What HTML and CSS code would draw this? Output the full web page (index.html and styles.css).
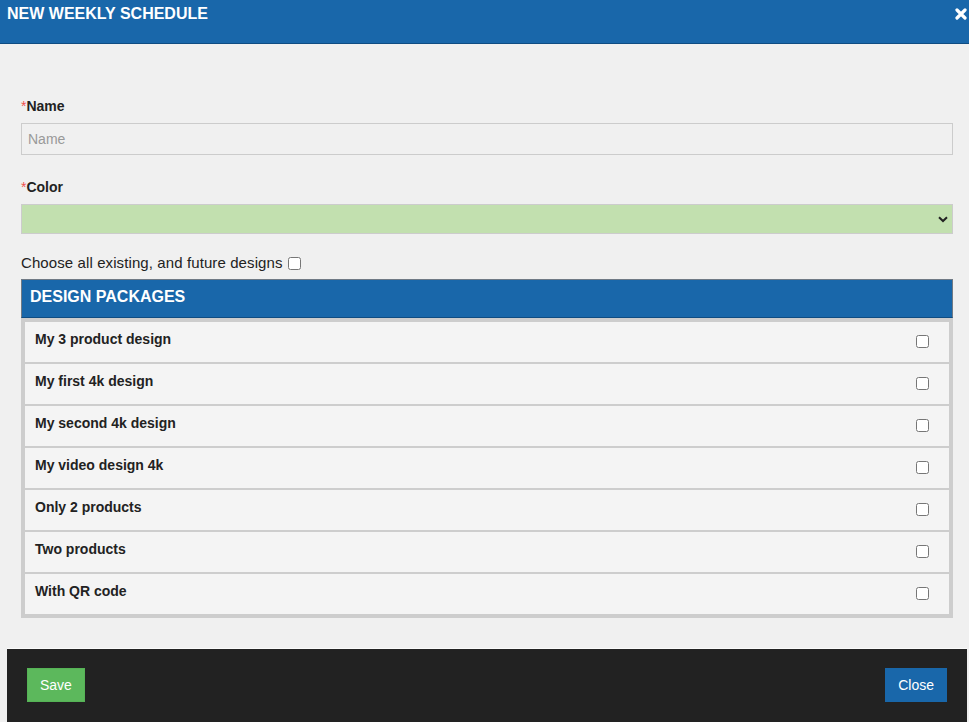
FILE: index.html
```html
<!DOCTYPE html>
<html>
<head>
<meta charset="utf-8">
<link rel="stylesheet" href="styles.css">
</head>
<body>
<div class="header">
  <div class="title">NEW WEEKLY SCHEDULE</div>
  <svg class="close-x" width="12" height="12" viewBox="0 0 12 12"><path d="M2 2 L10 10 M10 2 L2 10" stroke="#fff" stroke-width="3.2" stroke-linecap="round"/></svg>
</div>
<div class="content">
  <label class="field-label"><span class="req">*</span>Name</label>
  <input class="text-input" type="text" placeholder="Name">
  <label class="field-label second"><span class="req">*</span>Color</label>
  <div class="select-wrap">
    <select class="color-select"><option></option></select>
    <svg class="chev" width="10" height="7" viewBox="0 0 10 7"><path d="M1 1.2 L5 5 L9 1.2" fill="none" stroke="#222" stroke-width="2"/></svg>
  </div>
  <div class="choose-all">Choose all existing, and future designs <input type="checkbox" class="cb"></div>
  <div class="packages">
    <div class="pk-head">DESIGN PACKAGES</div>
    <div class="pk-body">
      <div class="pk-row"><span class="pk-name">My 3 product design</span><input type="checkbox" class="cb"></div>
      <div class="pk-row"><span class="pk-name">My first 4k design</span><input type="checkbox" class="cb"></div>
      <div class="pk-row"><span class="pk-name">My second 4k design</span><input type="checkbox" class="cb"></div>
      <div class="pk-row"><span class="pk-name">My video design 4k</span><input type="checkbox" class="cb"></div>
      <div class="pk-row"><span class="pk-name">Only 2 products</span><input type="checkbox" class="cb"></div>
      <div class="pk-row"><span class="pk-name">Two products</span><input type="checkbox" class="cb"></div>
      <div class="pk-row"><span class="pk-name">With QR code</span><input type="checkbox" class="cb"></div>
    </div>
  </div>
</div>
<div class="footer">
  <button class="btn btn-save">Save</button>
  <button class="btn btn-close">Close</button>
</div>
</body>
</html>
```
FILE: styles.css
```css
html, body {
  margin: 0;
  padding: 0;
  background: #f0f0f0;
  font-family: "Liberation Sans", Arial, sans-serif;
  color: #222;
}
.header {
  height: 43px;
  background: #1967aa;
  border-bottom: 1px solid #0f4c82;
  display: flex;
  justify-content: space-between;
  align-items: flex-start;
  padding: 0 2px 0 7px;
}
.title {
  color: #fff;
  font-weight: bold;
  font-size: 16px;
  line-height: 18px;
  padding-top: 5px;
}
.close-x {
  margin-top: 8px;
}
.content {
  padding: 54px 16px 0 21px;
}
.field-label {
  display: block;
  font-size: 14px;
  font-weight: bold;
  line-height: 16px;
  margin-bottom: 9px;
  color: #222;
}
.field-label.second {
  margin-top: 24px;
}
.req {
  color: #f0524f;
  font-weight: normal;
}
.text-input {
  display: block;
  box-sizing: border-box;
  width: 100%;
  height: 32px;
  margin: 0;
  border: 1px solid #ccc;
  background: transparent;
  padding: 0 6px;
  font-family: "Liberation Sans", Arial, sans-serif;
  font-size: 14px;
  color: #333;
  outline: none;
}
.text-input::placeholder {
  color: #999;
}
.select-wrap {
  position: relative;
}
.color-select {
  display: block;
  box-sizing: border-box;
  width: 100%;
  height: 30px;
  margin: 0;
  border: 1px solid #ccc;
  background: #c2e0af;
  appearance: none;
  -webkit-appearance: none;
  border-radius: 0;
  outline: none;
}
.chev {
  position: absolute;
  right: 5px;
  top: 12px;
}
.choose-all {
  margin-top: 21px;
  display: flex;
  align-items: center;
  font-size: 15px;
  line-height: 16px;
  height: 16px;
  margin-bottom: 8px;
  color: #222;
  letter-spacing: 0.1px;
}
.choose-all .cb {
  margin: 0 0 0 5px;
}
.cb {
  width: 13px;
  height: 13px;
  margin: 0;
}
.pk-head {
  box-sizing: border-box;
  height: 39px;
  background: #1967aa;
  border: 1px solid #707a85;
  border-bottom: 1px solid #0f4c82;
  color: #fff;
  font-weight: bold;
  font-size: 16px;
  line-height: 18px;
  padding: 8px 8px 0;
}
.pk-body {
  background: #cdcdcd;
  padding: 4px;
  display: flex;
  flex-direction: column;
  gap: 2px;
}
.pk-row {
  height: 40px;
  background: #f4f4f4;
  display: flex;
  justify-content: space-between;
  align-items: center;
  padding: 0 20px 0 10px;
}
.pk-name {
  font-size: 14px;
  font-weight: bold;
  line-height: 16px;
  padding-bottom: 6px;
  color: #222;
}
.pk-row .cb {
  margin-bottom: 1px;
}
.footer {
  margin: 30px 2px 0 7px;
  border-top: 1px solid #fafafa;
  background: #222;
  height: 74px;
  box-sizing: border-box;
  padding: 19px 20px 0;
  display: flex;
  justify-content: space-between;
  align-items: flex-start;
}
.btn {
  height: 34px;
  padding: 0 12px;
  border: 1px solid transparent;
  color: #fff;
  font-family: "Liberation Sans", Arial, sans-serif;
  font-size: 14px;
  border-radius: 0;
  cursor: pointer;
}
.btn-save {
  background: #5cb85c;
  border-color: #56b356;
}
.btn-close {
  background: #1967aa;
  border-color: #1967aa;
}
```
